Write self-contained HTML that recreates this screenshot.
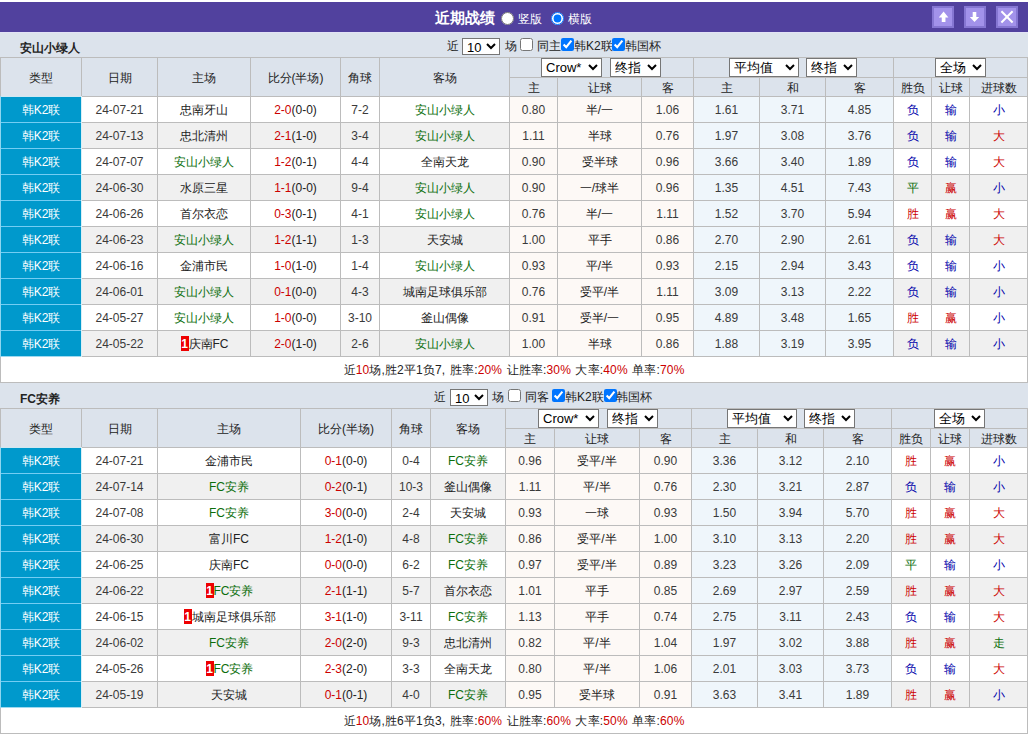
<!DOCTYPE html><html><head><meta charset="utf-8"><style>
html,body{margin:0;padding:0;background:#fff;}
body{width:1029px;height:735px;overflow:hidden;position:relative;font-family:"Liberation Sans",sans-serif;font-size:12px;color:#222;}
.a{position:absolute;}
.c{position:absolute;text-align:center;white-space:nowrap;overflow:hidden;}
.t{position:absolute;white-space:nowrap;}
.sel{position:absolute;margin:0;padding:0;font-family:"Liberation Sans",sans-serif;font-size:13px;color:#000;background:#fff;border:1px solid #767676;border-radius:0;box-sizing:border-box;}
.cb{position:absolute;margin:0;width:13px;height:13px;}
.card{display:inline-block;background:#e00;color:#fff;font-weight:bold;width:8px;height:15px;line-height:17px;overflow:hidden;text-align:center;vertical-align:middle;position:relative;top:-1px;margin-left:1px;}
</style></head><body>

<div class="a" style="left:0px;top:2px;width:1028px;height:732px;background:#dce3ec;"></div>
<div class="a" style="left:0px;top:2px;width:1028px;height:30px;background:#51419e;"></div>
<div class="a" style="left:0px;top:32px;width:1028px;height:1px;background:#e2e2f6;"></div>
<div class="t" style="left:435px;top:3px;width:80px;height:30px;line-height:30px;color:#fff;font-weight:bold;font-size:15px;text-align:left;">近期战绩</div>
<input type="radio" name="r" style="position:absolute;margin:0;left:501px;top:12px;width:13px;height:13px;">
<div class="t" style="left:518px;top:4px;width:40px;height:30px;line-height:30px;color:#fff;text-align:left;">竖版</div>
<input type="radio" name="r" checked style="position:absolute;margin:0;left:551px;top:12px;width:13px;height:13px;">
<div class="t" style="left:568px;top:4px;width:40px;height:30px;line-height:30px;color:#fff;text-align:left;">横版</div>
<div class="a" style="left:932px;top:6px;width:18px;height:18px;background:#a292ea;border:2px solid #8576d2;"></div>
<svg class="a" style="left:932px;top:6px" width="22" height="22"><path d="M11.6 5.6 L16.4 11.5 L13.45 11.5 L13.45 16 L9.75 16 L9.75 11.5 L6.8 11.5 Z" fill="#fff"/></svg>
<div class="a" style="left:964px;top:6px;width:18px;height:18px;background:#a292ea;border:2px solid #8576d2;"></div>
<svg class="a" style="left:964px;top:6px" width="22" height="22"><path d="M10.5 16 L15.2 11 L12.3 11 L12.3 6 L8.7 6 L8.7 11 L5.8 11 Z" fill="#fff"/></svg>
<div class="a" style="left:996px;top:6px;width:18px;height:18px;background:#a292ea;border:2px solid #8576d2;"></div>
<svg class="a" style="left:996px;top:6px" width="22" height="22"><path d="M5.4 5.2 L16.6 16.5 M16.6 5.2 L5.4 16.5" stroke="#fff" stroke-width="2"/></svg>
<div class="t" style="left:20px;top:36px;width:200px;height:25px;line-height:25px;font-weight:bold;text-align:left;font-size:12px;">安山小绿人</div>
<div class="t" style="left:447px;top:36px;width:60px;height:20px;line-height:20px;text-align:left;">近</div>
<select class="sel" style="left:462px;top:38px;width:38px;height:17px;"><option>10</option></select>
<div class="t" style="left:505px;top:36px;width:60px;height:20px;line-height:20px;text-align:left;">场</div>
<input type="checkbox" class="cb" style="left:520px;top:38px" >
<div class="t" style="left:537px;top:36px;width:60px;height:20px;line-height:20px;text-align:left;">同主</div>
<input type="checkbox" class="cb" style="left:561px;top:38px" checked>
<div class="t" style="left:574px;top:36px;width:60px;height:20px;line-height:20px;text-align:left;">韩K2联</div>
<input type="checkbox" class="cb" style="left:612px;top:38px" checked>
<div class="t" style="left:625px;top:36px;width:60px;height:20px;line-height:20px;text-align:left;">韩国杯</div>
<div class="a" style="left:0px;top:57px;width:1028px;height:326px;background:#bcbcbc;"></div>
<div class="a" style="left:1px;top:58px;width:80px;height:38px;background:#dce3ec;"></div>
<div class="c" style="left:1px;top:59px;width:80px;height:38px;line-height:38px;">类型</div>
<div class="a" style="left:82px;top:58px;width:75px;height:38px;background:#dce3ec;"></div>
<div class="c" style="left:82px;top:59px;width:75px;height:38px;line-height:38px;">日期</div>
<div class="a" style="left:158px;top:58px;width:92px;height:38px;background:#dce3ec;"></div>
<div class="c" style="left:158px;top:59px;width:92px;height:38px;line-height:38px;">主场</div>
<div class="a" style="left:251px;top:58px;width:89px;height:38px;background:#dce3ec;"></div>
<div class="c" style="left:251px;top:59px;width:89px;height:38px;line-height:38px;">比分(半场)</div>
<div class="a" style="left:341px;top:58px;width:38px;height:38px;background:#dce3ec;"></div>
<div class="c" style="left:341px;top:59px;width:38px;height:38px;line-height:38px;">角球</div>
<div class="a" style="left:380px;top:58px;width:129px;height:38px;background:#dce3ec;"></div>
<div class="c" style="left:380px;top:59px;width:129px;height:38px;line-height:38px;">客场</div>
<div class="a" style="left:510px;top:58px;width:183px;height:19px;background:#dce3ec;"></div>
<div class="a" style="left:694px;top:58px;width:199px;height:19px;background:#dce3ec;"></div>
<div class="a" style="left:894px;top:58px;width:133px;height:19px;background:#dce3ec;"></div>
<div class="a" style="left:510px;top:78px;width:47px;height:18px;background:#dce3ec;"></div>
<div class="c" style="left:510px;top:79px;width:47px;height:18px;line-height:18px;">主</div>
<div class="a" style="left:558px;top:78px;width:83px;height:18px;background:#dce3ec;"></div>
<div class="c" style="left:558px;top:79px;width:83px;height:18px;line-height:18px;">让球</div>
<div class="a" style="left:642px;top:78px;width:51px;height:18px;background:#dce3ec;"></div>
<div class="c" style="left:642px;top:79px;width:51px;height:18px;line-height:18px;">客</div>
<div class="a" style="left:694px;top:78px;width:65px;height:18px;background:#dce3ec;"></div>
<div class="c" style="left:694px;top:79px;width:65px;height:18px;line-height:18px;">主</div>
<div class="a" style="left:760px;top:78px;width:65px;height:18px;background:#dce3ec;"></div>
<div class="c" style="left:760px;top:79px;width:65px;height:18px;line-height:18px;">和</div>
<div class="a" style="left:826px;top:78px;width:67px;height:18px;background:#dce3ec;"></div>
<div class="c" style="left:826px;top:79px;width:67px;height:18px;line-height:18px;">客</div>
<div class="a" style="left:894px;top:78px;width:37px;height:18px;background:#dce3ec;"></div>
<div class="c" style="left:894px;top:79px;width:37px;height:18px;line-height:18px;">胜负</div>
<div class="a" style="left:932px;top:78px;width:37px;height:18px;background:#dce3ec;"></div>
<div class="c" style="left:932px;top:79px;width:37px;height:18px;line-height:18px;">让球</div>
<div class="a" style="left:970px;top:78px;width:57px;height:18px;background:#dce3ec;"></div>
<div class="c" style="left:970px;top:79px;width:57px;height:18px;line-height:18px;">进球数</div>
<select class="sel" style="left:541px;top:58px;width:61px;height:19px;"><option>Crow*</option></select>
<select class="sel" style="left:610px;top:58px;width:51px;height:19px;"><option>终指</option></select>
<select class="sel" style="left:729px;top:58px;width:70px;height:19px;"><option>平均值</option></select>
<select class="sel" style="left:806px;top:58px;width:51px;height:19px;"><option>终指</option></select>
<select class="sel" style="left:935px;top:58px;width:51px;height:19px;"><option>全场</option></select>
<div class="a" style="left:1px;top:97px;width:80px;height:25px;background:#0099cc;"></div>
<div class="c" style="left:1px;top:98px;width:80px;height:25px;line-height:25px;color:#fff;">韩K2联</div>
<div class="a" style="left:82px;top:97px;width:75px;height:25px;background:#fff;"></div>
<div class="c" style="left:82px;top:98px;width:75px;height:25px;line-height:25px;color:#3a3a3a;">24-07-21</div>
<div class="a" style="left:158px;top:97px;width:92px;height:25px;background:#fff;"></div>
<div class="c" style="left:158px;top:98px;width:92px;height:25px;line-height:25px;">忠南牙山</div>
<div class="a" style="left:251px;top:97px;width:89px;height:25px;background:#fff;"></div>
<div class="c" style="left:251px;top:98px;width:89px;height:25px;line-height:25px;"><span style="color:#cc0000">2-0</span>(0-0)</div>
<div class="a" style="left:341px;top:97px;width:38px;height:25px;background:#fff;"></div>
<div class="c" style="left:341px;top:98px;width:38px;height:25px;line-height:25px;color:#3a3a3a;">7-2</div>
<div class="a" style="left:380px;top:97px;width:129px;height:25px;background:#fff;"></div>
<div class="c" style="left:380px;top:98px;width:129px;height:25px;line-height:25px;"><span style="color:#0b6e0b">安山小绿人</span></div>
<div class="a" style="left:510px;top:97px;width:47px;height:25px;background:#fdf9f6;"></div>
<div class="c" style="left:510px;top:98px;width:47px;height:25px;line-height:25px;color:#3a3a3a;">0.80</div>
<div class="a" style="left:558px;top:97px;width:83px;height:25px;background:#fdf9f6;"></div>
<div class="c" style="left:558px;top:98px;width:83px;height:25px;line-height:25px;">半/一</div>
<div class="a" style="left:642px;top:97px;width:51px;height:25px;background:#fdf9f6;"></div>
<div class="c" style="left:642px;top:98px;width:51px;height:25px;line-height:25px;color:#3a3a3a;">1.06</div>
<div class="a" style="left:694px;top:97px;width:65px;height:25px;background:#eff6fb;"></div>
<div class="c" style="left:694px;top:98px;width:65px;height:25px;line-height:25px;color:#3a3a3a;">1.61</div>
<div class="a" style="left:760px;top:97px;width:65px;height:25px;background:#eff6fb;"></div>
<div class="c" style="left:760px;top:98px;width:65px;height:25px;line-height:25px;color:#3a3a3a;">3.71</div>
<div class="a" style="left:826px;top:97px;width:67px;height:25px;background:#eff6fb;"></div>
<div class="c" style="left:826px;top:98px;width:67px;height:25px;line-height:25px;color:#3a3a3a;">4.85</div>
<div class="a" style="left:894px;top:97px;width:37px;height:25px;background:#fff;"></div>
<div class="c" style="left:894px;top:98px;width:37px;height:25px;line-height:25px;"><span style="color:#0000aa">负</span></div>
<div class="a" style="left:932px;top:97px;width:37px;height:25px;background:#fff;"></div>
<div class="c" style="left:932px;top:98px;width:37px;height:25px;line-height:25px;"><span style="color:#0000aa">输</span></div>
<div class="a" style="left:970px;top:97px;width:57px;height:25px;background:#fff;"></div>
<div class="c" style="left:970px;top:98px;width:57px;height:25px;line-height:25px;"><span style="color:#0000aa">小</span></div>
<div class="a" style="left:1px;top:123px;width:80px;height:25px;background:#0099cc;"></div>
<div class="c" style="left:1px;top:124px;width:80px;height:25px;line-height:25px;color:#fff;">韩K2联</div>
<div class="a" style="left:82px;top:123px;width:75px;height:25px;background:#f0f0f0;"></div>
<div class="c" style="left:82px;top:124px;width:75px;height:25px;line-height:25px;color:#3a3a3a;">24-07-13</div>
<div class="a" style="left:158px;top:123px;width:92px;height:25px;background:#f0f0f0;"></div>
<div class="c" style="left:158px;top:124px;width:92px;height:25px;line-height:25px;">忠北清州</div>
<div class="a" style="left:251px;top:123px;width:89px;height:25px;background:#f0f0f0;"></div>
<div class="c" style="left:251px;top:124px;width:89px;height:25px;line-height:25px;"><span style="color:#cc0000">2-1</span>(1-0)</div>
<div class="a" style="left:341px;top:123px;width:38px;height:25px;background:#f0f0f0;"></div>
<div class="c" style="left:341px;top:124px;width:38px;height:25px;line-height:25px;color:#3a3a3a;">3-4</div>
<div class="a" style="left:380px;top:123px;width:129px;height:25px;background:#f0f0f0;"></div>
<div class="c" style="left:380px;top:124px;width:129px;height:25px;line-height:25px;"><span style="color:#0b6e0b">安山小绿人</span></div>
<div class="a" style="left:510px;top:123px;width:47px;height:25px;background:#fdf9f6;"></div>
<div class="c" style="left:510px;top:124px;width:47px;height:25px;line-height:25px;color:#3a3a3a;">1.11</div>
<div class="a" style="left:558px;top:123px;width:83px;height:25px;background:#fdf9f6;"></div>
<div class="c" style="left:558px;top:124px;width:83px;height:25px;line-height:25px;">半球</div>
<div class="a" style="left:642px;top:123px;width:51px;height:25px;background:#fdf9f6;"></div>
<div class="c" style="left:642px;top:124px;width:51px;height:25px;line-height:25px;color:#3a3a3a;">0.76</div>
<div class="a" style="left:694px;top:123px;width:65px;height:25px;background:#eff6fb;"></div>
<div class="c" style="left:694px;top:124px;width:65px;height:25px;line-height:25px;color:#3a3a3a;">1.97</div>
<div class="a" style="left:760px;top:123px;width:65px;height:25px;background:#eff6fb;"></div>
<div class="c" style="left:760px;top:124px;width:65px;height:25px;line-height:25px;color:#3a3a3a;">3.08</div>
<div class="a" style="left:826px;top:123px;width:67px;height:25px;background:#eff6fb;"></div>
<div class="c" style="left:826px;top:124px;width:67px;height:25px;line-height:25px;color:#3a3a3a;">3.76</div>
<div class="a" style="left:894px;top:123px;width:37px;height:25px;background:#f0f0f0;"></div>
<div class="c" style="left:894px;top:124px;width:37px;height:25px;line-height:25px;"><span style="color:#0000aa">负</span></div>
<div class="a" style="left:932px;top:123px;width:37px;height:25px;background:#f0f0f0;"></div>
<div class="c" style="left:932px;top:124px;width:37px;height:25px;line-height:25px;"><span style="color:#0000aa">输</span></div>
<div class="a" style="left:970px;top:123px;width:57px;height:25px;background:#f0f0f0;"></div>
<div class="c" style="left:970px;top:124px;width:57px;height:25px;line-height:25px;"><span style="color:#cc0000">大</span></div>
<div class="a" style="left:1px;top:149px;width:80px;height:25px;background:#0099cc;"></div>
<div class="c" style="left:1px;top:150px;width:80px;height:25px;line-height:25px;color:#fff;">韩K2联</div>
<div class="a" style="left:82px;top:149px;width:75px;height:25px;background:#fff;"></div>
<div class="c" style="left:82px;top:150px;width:75px;height:25px;line-height:25px;color:#3a3a3a;">24-07-07</div>
<div class="a" style="left:158px;top:149px;width:92px;height:25px;background:#fff;"></div>
<div class="c" style="left:158px;top:150px;width:92px;height:25px;line-height:25px;"><span style="color:#0b6e0b">安山小绿人</span></div>
<div class="a" style="left:251px;top:149px;width:89px;height:25px;background:#fff;"></div>
<div class="c" style="left:251px;top:150px;width:89px;height:25px;line-height:25px;"><span style="color:#cc0000">1-2</span>(0-1)</div>
<div class="a" style="left:341px;top:149px;width:38px;height:25px;background:#fff;"></div>
<div class="c" style="left:341px;top:150px;width:38px;height:25px;line-height:25px;color:#3a3a3a;">4-4</div>
<div class="a" style="left:380px;top:149px;width:129px;height:25px;background:#fff;"></div>
<div class="c" style="left:380px;top:150px;width:129px;height:25px;line-height:25px;">全南天龙</div>
<div class="a" style="left:510px;top:149px;width:47px;height:25px;background:#fdf9f6;"></div>
<div class="c" style="left:510px;top:150px;width:47px;height:25px;line-height:25px;color:#3a3a3a;">0.90</div>
<div class="a" style="left:558px;top:149px;width:83px;height:25px;background:#fdf9f6;"></div>
<div class="c" style="left:558px;top:150px;width:83px;height:25px;line-height:25px;">受半球</div>
<div class="a" style="left:642px;top:149px;width:51px;height:25px;background:#fdf9f6;"></div>
<div class="c" style="left:642px;top:150px;width:51px;height:25px;line-height:25px;color:#3a3a3a;">0.96</div>
<div class="a" style="left:694px;top:149px;width:65px;height:25px;background:#eff6fb;"></div>
<div class="c" style="left:694px;top:150px;width:65px;height:25px;line-height:25px;color:#3a3a3a;">3.66</div>
<div class="a" style="left:760px;top:149px;width:65px;height:25px;background:#eff6fb;"></div>
<div class="c" style="left:760px;top:150px;width:65px;height:25px;line-height:25px;color:#3a3a3a;">3.40</div>
<div class="a" style="left:826px;top:149px;width:67px;height:25px;background:#eff6fb;"></div>
<div class="c" style="left:826px;top:150px;width:67px;height:25px;line-height:25px;color:#3a3a3a;">1.89</div>
<div class="a" style="left:894px;top:149px;width:37px;height:25px;background:#fff;"></div>
<div class="c" style="left:894px;top:150px;width:37px;height:25px;line-height:25px;"><span style="color:#0000aa">负</span></div>
<div class="a" style="left:932px;top:149px;width:37px;height:25px;background:#fff;"></div>
<div class="c" style="left:932px;top:150px;width:37px;height:25px;line-height:25px;"><span style="color:#0000aa">输</span></div>
<div class="a" style="left:970px;top:149px;width:57px;height:25px;background:#fff;"></div>
<div class="c" style="left:970px;top:150px;width:57px;height:25px;line-height:25px;"><span style="color:#cc0000">大</span></div>
<div class="a" style="left:1px;top:175px;width:80px;height:25px;background:#0099cc;"></div>
<div class="c" style="left:1px;top:176px;width:80px;height:25px;line-height:25px;color:#fff;">韩K2联</div>
<div class="a" style="left:82px;top:175px;width:75px;height:25px;background:#f0f0f0;"></div>
<div class="c" style="left:82px;top:176px;width:75px;height:25px;line-height:25px;color:#3a3a3a;">24-06-30</div>
<div class="a" style="left:158px;top:175px;width:92px;height:25px;background:#f0f0f0;"></div>
<div class="c" style="left:158px;top:176px;width:92px;height:25px;line-height:25px;">水原三星</div>
<div class="a" style="left:251px;top:175px;width:89px;height:25px;background:#f0f0f0;"></div>
<div class="c" style="left:251px;top:176px;width:89px;height:25px;line-height:25px;"><span style="color:#cc0000">1-1</span>(0-0)</div>
<div class="a" style="left:341px;top:175px;width:38px;height:25px;background:#f0f0f0;"></div>
<div class="c" style="left:341px;top:176px;width:38px;height:25px;line-height:25px;color:#3a3a3a;">9-4</div>
<div class="a" style="left:380px;top:175px;width:129px;height:25px;background:#f0f0f0;"></div>
<div class="c" style="left:380px;top:176px;width:129px;height:25px;line-height:25px;"><span style="color:#0b6e0b">安山小绿人</span></div>
<div class="a" style="left:510px;top:175px;width:47px;height:25px;background:#fdf9f6;"></div>
<div class="c" style="left:510px;top:176px;width:47px;height:25px;line-height:25px;color:#3a3a3a;">0.90</div>
<div class="a" style="left:558px;top:175px;width:83px;height:25px;background:#fdf9f6;"></div>
<div class="c" style="left:558px;top:176px;width:83px;height:25px;line-height:25px;">一/球半</div>
<div class="a" style="left:642px;top:175px;width:51px;height:25px;background:#fdf9f6;"></div>
<div class="c" style="left:642px;top:176px;width:51px;height:25px;line-height:25px;color:#3a3a3a;">0.96</div>
<div class="a" style="left:694px;top:175px;width:65px;height:25px;background:#eff6fb;"></div>
<div class="c" style="left:694px;top:176px;width:65px;height:25px;line-height:25px;color:#3a3a3a;">1.35</div>
<div class="a" style="left:760px;top:175px;width:65px;height:25px;background:#eff6fb;"></div>
<div class="c" style="left:760px;top:176px;width:65px;height:25px;line-height:25px;color:#3a3a3a;">4.51</div>
<div class="a" style="left:826px;top:175px;width:67px;height:25px;background:#eff6fb;"></div>
<div class="c" style="left:826px;top:176px;width:67px;height:25px;line-height:25px;color:#3a3a3a;">7.43</div>
<div class="a" style="left:894px;top:175px;width:37px;height:25px;background:#f0f0f0;"></div>
<div class="c" style="left:894px;top:176px;width:37px;height:25px;line-height:25px;"><span style="color:#0b6e0b">平</span></div>
<div class="a" style="left:932px;top:175px;width:37px;height:25px;background:#f0f0f0;"></div>
<div class="c" style="left:932px;top:176px;width:37px;height:25px;line-height:25px;"><span style="color:#cc0000">赢</span></div>
<div class="a" style="left:970px;top:175px;width:57px;height:25px;background:#f0f0f0;"></div>
<div class="c" style="left:970px;top:176px;width:57px;height:25px;line-height:25px;"><span style="color:#0000aa">小</span></div>
<div class="a" style="left:1px;top:201px;width:80px;height:25px;background:#0099cc;"></div>
<div class="c" style="left:1px;top:202px;width:80px;height:25px;line-height:25px;color:#fff;">韩K2联</div>
<div class="a" style="left:82px;top:201px;width:75px;height:25px;background:#fff;"></div>
<div class="c" style="left:82px;top:202px;width:75px;height:25px;line-height:25px;color:#3a3a3a;">24-06-26</div>
<div class="a" style="left:158px;top:201px;width:92px;height:25px;background:#fff;"></div>
<div class="c" style="left:158px;top:202px;width:92px;height:25px;line-height:25px;">首尔衣恋</div>
<div class="a" style="left:251px;top:201px;width:89px;height:25px;background:#fff;"></div>
<div class="c" style="left:251px;top:202px;width:89px;height:25px;line-height:25px;"><span style="color:#cc0000">0-3</span>(0-1)</div>
<div class="a" style="left:341px;top:201px;width:38px;height:25px;background:#fff;"></div>
<div class="c" style="left:341px;top:202px;width:38px;height:25px;line-height:25px;color:#3a3a3a;">4-1</div>
<div class="a" style="left:380px;top:201px;width:129px;height:25px;background:#fff;"></div>
<div class="c" style="left:380px;top:202px;width:129px;height:25px;line-height:25px;"><span style="color:#0b6e0b">安山小绿人</span></div>
<div class="a" style="left:510px;top:201px;width:47px;height:25px;background:#fdf9f6;"></div>
<div class="c" style="left:510px;top:202px;width:47px;height:25px;line-height:25px;color:#3a3a3a;">0.76</div>
<div class="a" style="left:558px;top:201px;width:83px;height:25px;background:#fdf9f6;"></div>
<div class="c" style="left:558px;top:202px;width:83px;height:25px;line-height:25px;">半/一</div>
<div class="a" style="left:642px;top:201px;width:51px;height:25px;background:#fdf9f6;"></div>
<div class="c" style="left:642px;top:202px;width:51px;height:25px;line-height:25px;color:#3a3a3a;">1.11</div>
<div class="a" style="left:694px;top:201px;width:65px;height:25px;background:#eff6fb;"></div>
<div class="c" style="left:694px;top:202px;width:65px;height:25px;line-height:25px;color:#3a3a3a;">1.52</div>
<div class="a" style="left:760px;top:201px;width:65px;height:25px;background:#eff6fb;"></div>
<div class="c" style="left:760px;top:202px;width:65px;height:25px;line-height:25px;color:#3a3a3a;">3.70</div>
<div class="a" style="left:826px;top:201px;width:67px;height:25px;background:#eff6fb;"></div>
<div class="c" style="left:826px;top:202px;width:67px;height:25px;line-height:25px;color:#3a3a3a;">5.94</div>
<div class="a" style="left:894px;top:201px;width:37px;height:25px;background:#fff;"></div>
<div class="c" style="left:894px;top:202px;width:37px;height:25px;line-height:25px;"><span style="color:#cc0000">胜</span></div>
<div class="a" style="left:932px;top:201px;width:37px;height:25px;background:#fff;"></div>
<div class="c" style="left:932px;top:202px;width:37px;height:25px;line-height:25px;"><span style="color:#cc0000">赢</span></div>
<div class="a" style="left:970px;top:201px;width:57px;height:25px;background:#fff;"></div>
<div class="c" style="left:970px;top:202px;width:57px;height:25px;line-height:25px;"><span style="color:#cc0000">大</span></div>
<div class="a" style="left:1px;top:227px;width:80px;height:25px;background:#0099cc;"></div>
<div class="c" style="left:1px;top:228px;width:80px;height:25px;line-height:25px;color:#fff;">韩K2联</div>
<div class="a" style="left:82px;top:227px;width:75px;height:25px;background:#f0f0f0;"></div>
<div class="c" style="left:82px;top:228px;width:75px;height:25px;line-height:25px;color:#3a3a3a;">24-06-23</div>
<div class="a" style="left:158px;top:227px;width:92px;height:25px;background:#f0f0f0;"></div>
<div class="c" style="left:158px;top:228px;width:92px;height:25px;line-height:25px;"><span style="color:#0b6e0b">安山小绿人</span></div>
<div class="a" style="left:251px;top:227px;width:89px;height:25px;background:#f0f0f0;"></div>
<div class="c" style="left:251px;top:228px;width:89px;height:25px;line-height:25px;"><span style="color:#cc0000">1-2</span>(1-1)</div>
<div class="a" style="left:341px;top:227px;width:38px;height:25px;background:#f0f0f0;"></div>
<div class="c" style="left:341px;top:228px;width:38px;height:25px;line-height:25px;color:#3a3a3a;">1-3</div>
<div class="a" style="left:380px;top:227px;width:129px;height:25px;background:#f0f0f0;"></div>
<div class="c" style="left:380px;top:228px;width:129px;height:25px;line-height:25px;">天安城</div>
<div class="a" style="left:510px;top:227px;width:47px;height:25px;background:#fdf9f6;"></div>
<div class="c" style="left:510px;top:228px;width:47px;height:25px;line-height:25px;color:#3a3a3a;">1.00</div>
<div class="a" style="left:558px;top:227px;width:83px;height:25px;background:#fdf9f6;"></div>
<div class="c" style="left:558px;top:228px;width:83px;height:25px;line-height:25px;">平手</div>
<div class="a" style="left:642px;top:227px;width:51px;height:25px;background:#fdf9f6;"></div>
<div class="c" style="left:642px;top:228px;width:51px;height:25px;line-height:25px;color:#3a3a3a;">0.86</div>
<div class="a" style="left:694px;top:227px;width:65px;height:25px;background:#eff6fb;"></div>
<div class="c" style="left:694px;top:228px;width:65px;height:25px;line-height:25px;color:#3a3a3a;">2.70</div>
<div class="a" style="left:760px;top:227px;width:65px;height:25px;background:#eff6fb;"></div>
<div class="c" style="left:760px;top:228px;width:65px;height:25px;line-height:25px;color:#3a3a3a;">2.90</div>
<div class="a" style="left:826px;top:227px;width:67px;height:25px;background:#eff6fb;"></div>
<div class="c" style="left:826px;top:228px;width:67px;height:25px;line-height:25px;color:#3a3a3a;">2.61</div>
<div class="a" style="left:894px;top:227px;width:37px;height:25px;background:#f0f0f0;"></div>
<div class="c" style="left:894px;top:228px;width:37px;height:25px;line-height:25px;"><span style="color:#0000aa">负</span></div>
<div class="a" style="left:932px;top:227px;width:37px;height:25px;background:#f0f0f0;"></div>
<div class="c" style="left:932px;top:228px;width:37px;height:25px;line-height:25px;"><span style="color:#0000aa">输</span></div>
<div class="a" style="left:970px;top:227px;width:57px;height:25px;background:#f0f0f0;"></div>
<div class="c" style="left:970px;top:228px;width:57px;height:25px;line-height:25px;"><span style="color:#cc0000">大</span></div>
<div class="a" style="left:1px;top:253px;width:80px;height:25px;background:#0099cc;"></div>
<div class="c" style="left:1px;top:254px;width:80px;height:25px;line-height:25px;color:#fff;">韩K2联</div>
<div class="a" style="left:82px;top:253px;width:75px;height:25px;background:#fff;"></div>
<div class="c" style="left:82px;top:254px;width:75px;height:25px;line-height:25px;color:#3a3a3a;">24-06-16</div>
<div class="a" style="left:158px;top:253px;width:92px;height:25px;background:#fff;"></div>
<div class="c" style="left:158px;top:254px;width:92px;height:25px;line-height:25px;">金浦市民</div>
<div class="a" style="left:251px;top:253px;width:89px;height:25px;background:#fff;"></div>
<div class="c" style="left:251px;top:254px;width:89px;height:25px;line-height:25px;"><span style="color:#cc0000">1-0</span>(1-0)</div>
<div class="a" style="left:341px;top:253px;width:38px;height:25px;background:#fff;"></div>
<div class="c" style="left:341px;top:254px;width:38px;height:25px;line-height:25px;color:#3a3a3a;">1-4</div>
<div class="a" style="left:380px;top:253px;width:129px;height:25px;background:#fff;"></div>
<div class="c" style="left:380px;top:254px;width:129px;height:25px;line-height:25px;"><span style="color:#0b6e0b">安山小绿人</span></div>
<div class="a" style="left:510px;top:253px;width:47px;height:25px;background:#fdf9f6;"></div>
<div class="c" style="left:510px;top:254px;width:47px;height:25px;line-height:25px;color:#3a3a3a;">0.93</div>
<div class="a" style="left:558px;top:253px;width:83px;height:25px;background:#fdf9f6;"></div>
<div class="c" style="left:558px;top:254px;width:83px;height:25px;line-height:25px;">平/半</div>
<div class="a" style="left:642px;top:253px;width:51px;height:25px;background:#fdf9f6;"></div>
<div class="c" style="left:642px;top:254px;width:51px;height:25px;line-height:25px;color:#3a3a3a;">0.93</div>
<div class="a" style="left:694px;top:253px;width:65px;height:25px;background:#eff6fb;"></div>
<div class="c" style="left:694px;top:254px;width:65px;height:25px;line-height:25px;color:#3a3a3a;">2.15</div>
<div class="a" style="left:760px;top:253px;width:65px;height:25px;background:#eff6fb;"></div>
<div class="c" style="left:760px;top:254px;width:65px;height:25px;line-height:25px;color:#3a3a3a;">2.94</div>
<div class="a" style="left:826px;top:253px;width:67px;height:25px;background:#eff6fb;"></div>
<div class="c" style="left:826px;top:254px;width:67px;height:25px;line-height:25px;color:#3a3a3a;">3.43</div>
<div class="a" style="left:894px;top:253px;width:37px;height:25px;background:#fff;"></div>
<div class="c" style="left:894px;top:254px;width:37px;height:25px;line-height:25px;"><span style="color:#0000aa">负</span></div>
<div class="a" style="left:932px;top:253px;width:37px;height:25px;background:#fff;"></div>
<div class="c" style="left:932px;top:254px;width:37px;height:25px;line-height:25px;"><span style="color:#0000aa">输</span></div>
<div class="a" style="left:970px;top:253px;width:57px;height:25px;background:#fff;"></div>
<div class="c" style="left:970px;top:254px;width:57px;height:25px;line-height:25px;"><span style="color:#0000aa">小</span></div>
<div class="a" style="left:1px;top:279px;width:80px;height:25px;background:#0099cc;"></div>
<div class="c" style="left:1px;top:280px;width:80px;height:25px;line-height:25px;color:#fff;">韩K2联</div>
<div class="a" style="left:82px;top:279px;width:75px;height:25px;background:#f0f0f0;"></div>
<div class="c" style="left:82px;top:280px;width:75px;height:25px;line-height:25px;color:#3a3a3a;">24-06-01</div>
<div class="a" style="left:158px;top:279px;width:92px;height:25px;background:#f0f0f0;"></div>
<div class="c" style="left:158px;top:280px;width:92px;height:25px;line-height:25px;"><span style="color:#0b6e0b">安山小绿人</span></div>
<div class="a" style="left:251px;top:279px;width:89px;height:25px;background:#f0f0f0;"></div>
<div class="c" style="left:251px;top:280px;width:89px;height:25px;line-height:25px;"><span style="color:#cc0000">0-1</span>(0-0)</div>
<div class="a" style="left:341px;top:279px;width:38px;height:25px;background:#f0f0f0;"></div>
<div class="c" style="left:341px;top:280px;width:38px;height:25px;line-height:25px;color:#3a3a3a;">4-3</div>
<div class="a" style="left:380px;top:279px;width:129px;height:25px;background:#f0f0f0;"></div>
<div class="c" style="left:380px;top:280px;width:129px;height:25px;line-height:25px;">城南足球俱乐部</div>
<div class="a" style="left:510px;top:279px;width:47px;height:25px;background:#fdf9f6;"></div>
<div class="c" style="left:510px;top:280px;width:47px;height:25px;line-height:25px;color:#3a3a3a;">0.76</div>
<div class="a" style="left:558px;top:279px;width:83px;height:25px;background:#fdf9f6;"></div>
<div class="c" style="left:558px;top:280px;width:83px;height:25px;line-height:25px;">受平/半</div>
<div class="a" style="left:642px;top:279px;width:51px;height:25px;background:#fdf9f6;"></div>
<div class="c" style="left:642px;top:280px;width:51px;height:25px;line-height:25px;color:#3a3a3a;">1.11</div>
<div class="a" style="left:694px;top:279px;width:65px;height:25px;background:#eff6fb;"></div>
<div class="c" style="left:694px;top:280px;width:65px;height:25px;line-height:25px;color:#3a3a3a;">3.09</div>
<div class="a" style="left:760px;top:279px;width:65px;height:25px;background:#eff6fb;"></div>
<div class="c" style="left:760px;top:280px;width:65px;height:25px;line-height:25px;color:#3a3a3a;">3.13</div>
<div class="a" style="left:826px;top:279px;width:67px;height:25px;background:#eff6fb;"></div>
<div class="c" style="left:826px;top:280px;width:67px;height:25px;line-height:25px;color:#3a3a3a;">2.22</div>
<div class="a" style="left:894px;top:279px;width:37px;height:25px;background:#f0f0f0;"></div>
<div class="c" style="left:894px;top:280px;width:37px;height:25px;line-height:25px;"><span style="color:#0000aa">负</span></div>
<div class="a" style="left:932px;top:279px;width:37px;height:25px;background:#f0f0f0;"></div>
<div class="c" style="left:932px;top:280px;width:37px;height:25px;line-height:25px;"><span style="color:#0000aa">输</span></div>
<div class="a" style="left:970px;top:279px;width:57px;height:25px;background:#f0f0f0;"></div>
<div class="c" style="left:970px;top:280px;width:57px;height:25px;line-height:25px;"><span style="color:#0000aa">小</span></div>
<div class="a" style="left:1px;top:305px;width:80px;height:25px;background:#0099cc;"></div>
<div class="c" style="left:1px;top:306px;width:80px;height:25px;line-height:25px;color:#fff;">韩K2联</div>
<div class="a" style="left:82px;top:305px;width:75px;height:25px;background:#fff;"></div>
<div class="c" style="left:82px;top:306px;width:75px;height:25px;line-height:25px;color:#3a3a3a;">24-05-27</div>
<div class="a" style="left:158px;top:305px;width:92px;height:25px;background:#fff;"></div>
<div class="c" style="left:158px;top:306px;width:92px;height:25px;line-height:25px;"><span style="color:#0b6e0b">安山小绿人</span></div>
<div class="a" style="left:251px;top:305px;width:89px;height:25px;background:#fff;"></div>
<div class="c" style="left:251px;top:306px;width:89px;height:25px;line-height:25px;"><span style="color:#cc0000">1-0</span>(0-0)</div>
<div class="a" style="left:341px;top:305px;width:38px;height:25px;background:#fff;"></div>
<div class="c" style="left:341px;top:306px;width:38px;height:25px;line-height:25px;color:#3a3a3a;">3-10</div>
<div class="a" style="left:380px;top:305px;width:129px;height:25px;background:#fff;"></div>
<div class="c" style="left:380px;top:306px;width:129px;height:25px;line-height:25px;">釜山偶像</div>
<div class="a" style="left:510px;top:305px;width:47px;height:25px;background:#fdf9f6;"></div>
<div class="c" style="left:510px;top:306px;width:47px;height:25px;line-height:25px;color:#3a3a3a;">0.91</div>
<div class="a" style="left:558px;top:305px;width:83px;height:25px;background:#fdf9f6;"></div>
<div class="c" style="left:558px;top:306px;width:83px;height:25px;line-height:25px;">受半/一</div>
<div class="a" style="left:642px;top:305px;width:51px;height:25px;background:#fdf9f6;"></div>
<div class="c" style="left:642px;top:306px;width:51px;height:25px;line-height:25px;color:#3a3a3a;">0.95</div>
<div class="a" style="left:694px;top:305px;width:65px;height:25px;background:#eff6fb;"></div>
<div class="c" style="left:694px;top:306px;width:65px;height:25px;line-height:25px;color:#3a3a3a;">4.89</div>
<div class="a" style="left:760px;top:305px;width:65px;height:25px;background:#eff6fb;"></div>
<div class="c" style="left:760px;top:306px;width:65px;height:25px;line-height:25px;color:#3a3a3a;">3.48</div>
<div class="a" style="left:826px;top:305px;width:67px;height:25px;background:#eff6fb;"></div>
<div class="c" style="left:826px;top:306px;width:67px;height:25px;line-height:25px;color:#3a3a3a;">1.65</div>
<div class="a" style="left:894px;top:305px;width:37px;height:25px;background:#fff;"></div>
<div class="c" style="left:894px;top:306px;width:37px;height:25px;line-height:25px;"><span style="color:#cc0000">胜</span></div>
<div class="a" style="left:932px;top:305px;width:37px;height:25px;background:#fff;"></div>
<div class="c" style="left:932px;top:306px;width:37px;height:25px;line-height:25px;"><span style="color:#cc0000">赢</span></div>
<div class="a" style="left:970px;top:305px;width:57px;height:25px;background:#fff;"></div>
<div class="c" style="left:970px;top:306px;width:57px;height:25px;line-height:25px;"><span style="color:#0000aa">小</span></div>
<div class="a" style="left:1px;top:331px;width:80px;height:25px;background:#0099cc;"></div>
<div class="c" style="left:1px;top:332px;width:80px;height:25px;line-height:25px;color:#fff;">韩K2联</div>
<div class="a" style="left:82px;top:331px;width:75px;height:25px;background:#f0f0f0;"></div>
<div class="c" style="left:82px;top:332px;width:75px;height:25px;line-height:25px;color:#3a3a3a;">24-05-22</div>
<div class="a" style="left:158px;top:331px;width:92px;height:25px;background:#f0f0f0;"></div>
<div class="c" style="left:158px;top:332px;width:92px;height:25px;line-height:25px;"><span class="card">1</span>庆南FC</div>
<div class="a" style="left:251px;top:331px;width:89px;height:25px;background:#f0f0f0;"></div>
<div class="c" style="left:251px;top:332px;width:89px;height:25px;line-height:25px;"><span style="color:#cc0000">2-0</span>(1-0)</div>
<div class="a" style="left:341px;top:331px;width:38px;height:25px;background:#f0f0f0;"></div>
<div class="c" style="left:341px;top:332px;width:38px;height:25px;line-height:25px;color:#3a3a3a;">2-6</div>
<div class="a" style="left:380px;top:331px;width:129px;height:25px;background:#f0f0f0;"></div>
<div class="c" style="left:380px;top:332px;width:129px;height:25px;line-height:25px;"><span style="color:#0b6e0b">安山小绿人</span></div>
<div class="a" style="left:510px;top:331px;width:47px;height:25px;background:#fdf9f6;"></div>
<div class="c" style="left:510px;top:332px;width:47px;height:25px;line-height:25px;color:#3a3a3a;">1.00</div>
<div class="a" style="left:558px;top:331px;width:83px;height:25px;background:#fdf9f6;"></div>
<div class="c" style="left:558px;top:332px;width:83px;height:25px;line-height:25px;">半球</div>
<div class="a" style="left:642px;top:331px;width:51px;height:25px;background:#fdf9f6;"></div>
<div class="c" style="left:642px;top:332px;width:51px;height:25px;line-height:25px;color:#3a3a3a;">0.86</div>
<div class="a" style="left:694px;top:331px;width:65px;height:25px;background:#eff6fb;"></div>
<div class="c" style="left:694px;top:332px;width:65px;height:25px;line-height:25px;color:#3a3a3a;">1.88</div>
<div class="a" style="left:760px;top:331px;width:65px;height:25px;background:#eff6fb;"></div>
<div class="c" style="left:760px;top:332px;width:65px;height:25px;line-height:25px;color:#3a3a3a;">3.19</div>
<div class="a" style="left:826px;top:331px;width:67px;height:25px;background:#eff6fb;"></div>
<div class="c" style="left:826px;top:332px;width:67px;height:25px;line-height:25px;color:#3a3a3a;">3.95</div>
<div class="a" style="left:894px;top:331px;width:37px;height:25px;background:#f0f0f0;"></div>
<div class="c" style="left:894px;top:332px;width:37px;height:25px;line-height:25px;"><span style="color:#0000aa">负</span></div>
<div class="a" style="left:932px;top:331px;width:37px;height:25px;background:#f0f0f0;"></div>
<div class="c" style="left:932px;top:332px;width:37px;height:25px;line-height:25px;"><span style="color:#0000aa">输</span></div>
<div class="a" style="left:970px;top:331px;width:57px;height:25px;background:#f0f0f0;"></div>
<div class="c" style="left:970px;top:332px;width:57px;height:25px;line-height:25px;"><span style="color:#0000aa">小</span></div>
<div class="a" style="left:0px;top:96px;width:1px;height:261px;background:#8fd6f0;"></div>
<div class="a" style="left:1px;top:96px;width:80px;height:1px;background:#cfe8f2;"></div>
<div class="a" style="left:81px;top:96px;width:1px;height:261px;background:#d8eff7;"></div>
<div class="a" style="left:1px;top:122px;width:80px;height:1px;background:#74cdf3;"></div>
<div class="a" style="left:1px;top:148px;width:80px;height:1px;background:#74cdf3;"></div>
<div class="a" style="left:1px;top:174px;width:80px;height:1px;background:#74cdf3;"></div>
<div class="a" style="left:1px;top:200px;width:80px;height:1px;background:#74cdf3;"></div>
<div class="a" style="left:1px;top:226px;width:80px;height:1px;background:#74cdf3;"></div>
<div class="a" style="left:1px;top:252px;width:80px;height:1px;background:#74cdf3;"></div>
<div class="a" style="left:1px;top:278px;width:80px;height:1px;background:#74cdf3;"></div>
<div class="a" style="left:1px;top:304px;width:80px;height:1px;background:#74cdf3;"></div>
<div class="a" style="left:1px;top:330px;width:80px;height:1px;background:#74cdf3;"></div>
<div class="a" style="left:1px;top:356px;width:80px;height:1px;background:#9fd9ef;"></div>
<div class="a" style="left:1px;top:357px;width:1026px;height:25px;background:#fff;"></div>
<div class="c" style="left:1px;top:358px;width:1026px;height:25px;line-height:25px;letter-spacing:0.15px;word-spacing:1px;">近<span style="color:#cc0000">10</span>场,胜2平1负7, 胜率:<span style="color:#cc0000">20%</span> 让胜率:<span style="color:#cc0000">30%</span> 大率:<span style="color:#cc0000">40%</span> 单率:<span style="color:#cc0000">70%</span></div>
<div class="t" style="left:20px;top:387px;width:200px;height:25px;line-height:25px;font-weight:bold;text-align:left;font-size:12px;">FC安养</div>
<div class="t" style="left:434px;top:387px;width:60px;height:20px;line-height:20px;text-align:left;">近</div>
<select class="sel" style="left:450px;top:389px;width:38px;height:17px;"><option>10</option></select>
<div class="t" style="left:492px;top:387px;width:60px;height:20px;line-height:20px;text-align:left;">场</div>
<input type="checkbox" class="cb" style="left:508px;top:389px" >
<div class="t" style="left:525px;top:387px;width:60px;height:20px;line-height:20px;text-align:left;">同客</div>
<input type="checkbox" class="cb" style="left:552px;top:389px" checked>
<div class="t" style="left:565px;top:387px;width:60px;height:20px;line-height:20px;text-align:left;">韩K2联</div>
<input type="checkbox" class="cb" style="left:604px;top:389px" checked>
<div class="t" style="left:616px;top:387px;width:60px;height:20px;line-height:20px;text-align:left;">韩国杯</div>
<div class="a" style="left:0px;top:408px;width:1028px;height:326px;background:#bcbcbc;"></div>
<div class="a" style="left:1px;top:409px;width:80px;height:38px;background:#dce3ec;"></div>
<div class="c" style="left:1px;top:410px;width:80px;height:38px;line-height:38px;">类型</div>
<div class="a" style="left:82px;top:409px;width:75px;height:38px;background:#dce3ec;"></div>
<div class="c" style="left:82px;top:410px;width:75px;height:38px;line-height:38px;">日期</div>
<div class="a" style="left:158px;top:409px;width:142px;height:38px;background:#dce3ec;"></div>
<div class="c" style="left:158px;top:410px;width:142px;height:38px;line-height:38px;">主场</div>
<div class="a" style="left:301px;top:409px;width:90px;height:38px;background:#dce3ec;"></div>
<div class="c" style="left:301px;top:410px;width:90px;height:38px;line-height:38px;">比分(半场)</div>
<div class="a" style="left:392px;top:409px;width:38px;height:38px;background:#dce3ec;"></div>
<div class="c" style="left:392px;top:410px;width:38px;height:38px;line-height:38px;">角球</div>
<div class="a" style="left:431px;top:409px;width:74px;height:38px;background:#dce3ec;"></div>
<div class="c" style="left:431px;top:410px;width:74px;height:38px;line-height:38px;">客场</div>
<div class="a" style="left:506px;top:409px;width:185px;height:19px;background:#dce3ec;"></div>
<div class="a" style="left:692px;top:409px;width:199px;height:19px;background:#dce3ec;"></div>
<div class="a" style="left:892px;top:409px;width:135px;height:19px;background:#dce3ec;"></div>
<div class="a" style="left:506px;top:429px;width:48px;height:18px;background:#dce3ec;"></div>
<div class="c" style="left:506px;top:430px;width:48px;height:18px;line-height:18px;">主</div>
<div class="a" style="left:555px;top:429px;width:84px;height:18px;background:#dce3ec;"></div>
<div class="c" style="left:555px;top:430px;width:84px;height:18px;line-height:18px;">让球</div>
<div class="a" style="left:640px;top:429px;width:51px;height:18px;background:#dce3ec;"></div>
<div class="c" style="left:640px;top:430px;width:51px;height:18px;line-height:18px;">客</div>
<div class="a" style="left:692px;top:429px;width:65px;height:18px;background:#dce3ec;"></div>
<div class="c" style="left:692px;top:430px;width:65px;height:18px;line-height:18px;">主</div>
<div class="a" style="left:758px;top:429px;width:65px;height:18px;background:#dce3ec;"></div>
<div class="c" style="left:758px;top:430px;width:65px;height:18px;line-height:18px;">和</div>
<div class="a" style="left:824px;top:429px;width:67px;height:18px;background:#dce3ec;"></div>
<div class="c" style="left:824px;top:430px;width:67px;height:18px;line-height:18px;">客</div>
<div class="a" style="left:892px;top:429px;width:38px;height:18px;background:#dce3ec;"></div>
<div class="c" style="left:892px;top:430px;width:38px;height:18px;line-height:18px;">胜负</div>
<div class="a" style="left:931px;top:429px;width:38px;height:18px;background:#dce3ec;"></div>
<div class="c" style="left:931px;top:430px;width:38px;height:18px;line-height:18px;">让球</div>
<div class="a" style="left:970px;top:429px;width:57px;height:18px;background:#dce3ec;"></div>
<div class="c" style="left:970px;top:430px;width:57px;height:18px;line-height:18px;">进球数</div>
<select class="sel" style="left:538px;top:409px;width:61px;height:19px;"><option>Crow*</option></select>
<select class="sel" style="left:607px;top:409px;width:51px;height:19px;"><option>终指</option></select>
<select class="sel" style="left:727px;top:409px;width:70px;height:19px;"><option>平均值</option></select>
<select class="sel" style="left:804px;top:409px;width:51px;height:19px;"><option>终指</option></select>
<select class="sel" style="left:934px;top:409px;width:51px;height:19px;"><option>全场</option></select>
<div class="a" style="left:1px;top:448px;width:80px;height:25px;background:#0099cc;"></div>
<div class="c" style="left:1px;top:449px;width:80px;height:25px;line-height:25px;color:#fff;">韩K2联</div>
<div class="a" style="left:82px;top:448px;width:75px;height:25px;background:#fff;"></div>
<div class="c" style="left:82px;top:449px;width:75px;height:25px;line-height:25px;color:#3a3a3a;">24-07-21</div>
<div class="a" style="left:158px;top:448px;width:142px;height:25px;background:#fff;"></div>
<div class="c" style="left:158px;top:449px;width:142px;height:25px;line-height:25px;">金浦市民</div>
<div class="a" style="left:301px;top:448px;width:90px;height:25px;background:#fff;"></div>
<div class="c" style="left:301px;top:449px;width:90px;height:25px;line-height:25px;"><span style="color:#cc0000">0-1</span>(0-0)</div>
<div class="a" style="left:392px;top:448px;width:38px;height:25px;background:#fff;"></div>
<div class="c" style="left:392px;top:449px;width:38px;height:25px;line-height:25px;color:#3a3a3a;">0-4</div>
<div class="a" style="left:431px;top:448px;width:74px;height:25px;background:#fff;"></div>
<div class="c" style="left:431px;top:449px;width:74px;height:25px;line-height:25px;"><span style="color:#0b6e0b">FC安养</span></div>
<div class="a" style="left:506px;top:448px;width:48px;height:25px;background:#fdf9f6;"></div>
<div class="c" style="left:506px;top:449px;width:48px;height:25px;line-height:25px;color:#3a3a3a;">0.96</div>
<div class="a" style="left:555px;top:448px;width:84px;height:25px;background:#fdf9f6;"></div>
<div class="c" style="left:555px;top:449px;width:84px;height:25px;line-height:25px;">受平/半</div>
<div class="a" style="left:640px;top:448px;width:51px;height:25px;background:#fdf9f6;"></div>
<div class="c" style="left:640px;top:449px;width:51px;height:25px;line-height:25px;color:#3a3a3a;">0.90</div>
<div class="a" style="left:692px;top:448px;width:65px;height:25px;background:#eff6fb;"></div>
<div class="c" style="left:692px;top:449px;width:65px;height:25px;line-height:25px;color:#3a3a3a;">3.36</div>
<div class="a" style="left:758px;top:448px;width:65px;height:25px;background:#eff6fb;"></div>
<div class="c" style="left:758px;top:449px;width:65px;height:25px;line-height:25px;color:#3a3a3a;">3.12</div>
<div class="a" style="left:824px;top:448px;width:67px;height:25px;background:#eff6fb;"></div>
<div class="c" style="left:824px;top:449px;width:67px;height:25px;line-height:25px;color:#3a3a3a;">2.10</div>
<div class="a" style="left:892px;top:448px;width:38px;height:25px;background:#fff;"></div>
<div class="c" style="left:892px;top:449px;width:38px;height:25px;line-height:25px;"><span style="color:#cc0000">胜</span></div>
<div class="a" style="left:931px;top:448px;width:38px;height:25px;background:#fff;"></div>
<div class="c" style="left:931px;top:449px;width:38px;height:25px;line-height:25px;"><span style="color:#cc0000">赢</span></div>
<div class="a" style="left:970px;top:448px;width:57px;height:25px;background:#fff;"></div>
<div class="c" style="left:970px;top:449px;width:57px;height:25px;line-height:25px;"><span style="color:#0000aa">小</span></div>
<div class="a" style="left:1px;top:474px;width:80px;height:25px;background:#0099cc;"></div>
<div class="c" style="left:1px;top:475px;width:80px;height:25px;line-height:25px;color:#fff;">韩K2联</div>
<div class="a" style="left:82px;top:474px;width:75px;height:25px;background:#f0f0f0;"></div>
<div class="c" style="left:82px;top:475px;width:75px;height:25px;line-height:25px;color:#3a3a3a;">24-07-14</div>
<div class="a" style="left:158px;top:474px;width:142px;height:25px;background:#f0f0f0;"></div>
<div class="c" style="left:158px;top:475px;width:142px;height:25px;line-height:25px;"><span style="color:#0b6e0b">FC安养</span></div>
<div class="a" style="left:301px;top:474px;width:90px;height:25px;background:#f0f0f0;"></div>
<div class="c" style="left:301px;top:475px;width:90px;height:25px;line-height:25px;"><span style="color:#cc0000">0-2</span>(0-1)</div>
<div class="a" style="left:392px;top:474px;width:38px;height:25px;background:#f0f0f0;"></div>
<div class="c" style="left:392px;top:475px;width:38px;height:25px;line-height:25px;color:#3a3a3a;">10-3</div>
<div class="a" style="left:431px;top:474px;width:74px;height:25px;background:#f0f0f0;"></div>
<div class="c" style="left:431px;top:475px;width:74px;height:25px;line-height:25px;">釜山偶像</div>
<div class="a" style="left:506px;top:474px;width:48px;height:25px;background:#fdf9f6;"></div>
<div class="c" style="left:506px;top:475px;width:48px;height:25px;line-height:25px;color:#3a3a3a;">1.11</div>
<div class="a" style="left:555px;top:474px;width:84px;height:25px;background:#fdf9f6;"></div>
<div class="c" style="left:555px;top:475px;width:84px;height:25px;line-height:25px;">平/半</div>
<div class="a" style="left:640px;top:474px;width:51px;height:25px;background:#fdf9f6;"></div>
<div class="c" style="left:640px;top:475px;width:51px;height:25px;line-height:25px;color:#3a3a3a;">0.76</div>
<div class="a" style="left:692px;top:474px;width:65px;height:25px;background:#eff6fb;"></div>
<div class="c" style="left:692px;top:475px;width:65px;height:25px;line-height:25px;color:#3a3a3a;">2.30</div>
<div class="a" style="left:758px;top:474px;width:65px;height:25px;background:#eff6fb;"></div>
<div class="c" style="left:758px;top:475px;width:65px;height:25px;line-height:25px;color:#3a3a3a;">3.21</div>
<div class="a" style="left:824px;top:474px;width:67px;height:25px;background:#eff6fb;"></div>
<div class="c" style="left:824px;top:475px;width:67px;height:25px;line-height:25px;color:#3a3a3a;">2.87</div>
<div class="a" style="left:892px;top:474px;width:38px;height:25px;background:#f0f0f0;"></div>
<div class="c" style="left:892px;top:475px;width:38px;height:25px;line-height:25px;"><span style="color:#0000aa">负</span></div>
<div class="a" style="left:931px;top:474px;width:38px;height:25px;background:#f0f0f0;"></div>
<div class="c" style="left:931px;top:475px;width:38px;height:25px;line-height:25px;"><span style="color:#0000aa">输</span></div>
<div class="a" style="left:970px;top:474px;width:57px;height:25px;background:#f0f0f0;"></div>
<div class="c" style="left:970px;top:475px;width:57px;height:25px;line-height:25px;"><span style="color:#0000aa">小</span></div>
<div class="a" style="left:1px;top:500px;width:80px;height:25px;background:#0099cc;"></div>
<div class="c" style="left:1px;top:501px;width:80px;height:25px;line-height:25px;color:#fff;">韩K2联</div>
<div class="a" style="left:82px;top:500px;width:75px;height:25px;background:#fff;"></div>
<div class="c" style="left:82px;top:501px;width:75px;height:25px;line-height:25px;color:#3a3a3a;">24-07-08</div>
<div class="a" style="left:158px;top:500px;width:142px;height:25px;background:#fff;"></div>
<div class="c" style="left:158px;top:501px;width:142px;height:25px;line-height:25px;"><span style="color:#0b6e0b">FC安养</span></div>
<div class="a" style="left:301px;top:500px;width:90px;height:25px;background:#fff;"></div>
<div class="c" style="left:301px;top:501px;width:90px;height:25px;line-height:25px;"><span style="color:#cc0000">3-0</span>(0-0)</div>
<div class="a" style="left:392px;top:500px;width:38px;height:25px;background:#fff;"></div>
<div class="c" style="left:392px;top:501px;width:38px;height:25px;line-height:25px;color:#3a3a3a;">2-4</div>
<div class="a" style="left:431px;top:500px;width:74px;height:25px;background:#fff;"></div>
<div class="c" style="left:431px;top:501px;width:74px;height:25px;line-height:25px;">天安城</div>
<div class="a" style="left:506px;top:500px;width:48px;height:25px;background:#fdf9f6;"></div>
<div class="c" style="left:506px;top:501px;width:48px;height:25px;line-height:25px;color:#3a3a3a;">0.93</div>
<div class="a" style="left:555px;top:500px;width:84px;height:25px;background:#fdf9f6;"></div>
<div class="c" style="left:555px;top:501px;width:84px;height:25px;line-height:25px;">一球</div>
<div class="a" style="left:640px;top:500px;width:51px;height:25px;background:#fdf9f6;"></div>
<div class="c" style="left:640px;top:501px;width:51px;height:25px;line-height:25px;color:#3a3a3a;">0.93</div>
<div class="a" style="left:692px;top:500px;width:65px;height:25px;background:#eff6fb;"></div>
<div class="c" style="left:692px;top:501px;width:65px;height:25px;line-height:25px;color:#3a3a3a;">1.50</div>
<div class="a" style="left:758px;top:500px;width:65px;height:25px;background:#eff6fb;"></div>
<div class="c" style="left:758px;top:501px;width:65px;height:25px;line-height:25px;color:#3a3a3a;">3.94</div>
<div class="a" style="left:824px;top:500px;width:67px;height:25px;background:#eff6fb;"></div>
<div class="c" style="left:824px;top:501px;width:67px;height:25px;line-height:25px;color:#3a3a3a;">5.70</div>
<div class="a" style="left:892px;top:500px;width:38px;height:25px;background:#fff;"></div>
<div class="c" style="left:892px;top:501px;width:38px;height:25px;line-height:25px;"><span style="color:#cc0000">胜</span></div>
<div class="a" style="left:931px;top:500px;width:38px;height:25px;background:#fff;"></div>
<div class="c" style="left:931px;top:501px;width:38px;height:25px;line-height:25px;"><span style="color:#cc0000">赢</span></div>
<div class="a" style="left:970px;top:500px;width:57px;height:25px;background:#fff;"></div>
<div class="c" style="left:970px;top:501px;width:57px;height:25px;line-height:25px;"><span style="color:#cc0000">大</span></div>
<div class="a" style="left:1px;top:526px;width:80px;height:25px;background:#0099cc;"></div>
<div class="c" style="left:1px;top:527px;width:80px;height:25px;line-height:25px;color:#fff;">韩K2联</div>
<div class="a" style="left:82px;top:526px;width:75px;height:25px;background:#f0f0f0;"></div>
<div class="c" style="left:82px;top:527px;width:75px;height:25px;line-height:25px;color:#3a3a3a;">24-06-30</div>
<div class="a" style="left:158px;top:526px;width:142px;height:25px;background:#f0f0f0;"></div>
<div class="c" style="left:158px;top:527px;width:142px;height:25px;line-height:25px;">富川FC</div>
<div class="a" style="left:301px;top:526px;width:90px;height:25px;background:#f0f0f0;"></div>
<div class="c" style="left:301px;top:527px;width:90px;height:25px;line-height:25px;"><span style="color:#cc0000">1-2</span>(1-0)</div>
<div class="a" style="left:392px;top:526px;width:38px;height:25px;background:#f0f0f0;"></div>
<div class="c" style="left:392px;top:527px;width:38px;height:25px;line-height:25px;color:#3a3a3a;">4-8</div>
<div class="a" style="left:431px;top:526px;width:74px;height:25px;background:#f0f0f0;"></div>
<div class="c" style="left:431px;top:527px;width:74px;height:25px;line-height:25px;"><span style="color:#0b6e0b">FC安养</span></div>
<div class="a" style="left:506px;top:526px;width:48px;height:25px;background:#fdf9f6;"></div>
<div class="c" style="left:506px;top:527px;width:48px;height:25px;line-height:25px;color:#3a3a3a;">0.86</div>
<div class="a" style="left:555px;top:526px;width:84px;height:25px;background:#fdf9f6;"></div>
<div class="c" style="left:555px;top:527px;width:84px;height:25px;line-height:25px;">受平/半</div>
<div class="a" style="left:640px;top:526px;width:51px;height:25px;background:#fdf9f6;"></div>
<div class="c" style="left:640px;top:527px;width:51px;height:25px;line-height:25px;color:#3a3a3a;">1.00</div>
<div class="a" style="left:692px;top:526px;width:65px;height:25px;background:#eff6fb;"></div>
<div class="c" style="left:692px;top:527px;width:65px;height:25px;line-height:25px;color:#3a3a3a;">3.10</div>
<div class="a" style="left:758px;top:526px;width:65px;height:25px;background:#eff6fb;"></div>
<div class="c" style="left:758px;top:527px;width:65px;height:25px;line-height:25px;color:#3a3a3a;">3.13</div>
<div class="a" style="left:824px;top:526px;width:67px;height:25px;background:#eff6fb;"></div>
<div class="c" style="left:824px;top:527px;width:67px;height:25px;line-height:25px;color:#3a3a3a;">2.20</div>
<div class="a" style="left:892px;top:526px;width:38px;height:25px;background:#f0f0f0;"></div>
<div class="c" style="left:892px;top:527px;width:38px;height:25px;line-height:25px;"><span style="color:#cc0000">胜</span></div>
<div class="a" style="left:931px;top:526px;width:38px;height:25px;background:#f0f0f0;"></div>
<div class="c" style="left:931px;top:527px;width:38px;height:25px;line-height:25px;"><span style="color:#cc0000">赢</span></div>
<div class="a" style="left:970px;top:526px;width:57px;height:25px;background:#f0f0f0;"></div>
<div class="c" style="left:970px;top:527px;width:57px;height:25px;line-height:25px;"><span style="color:#cc0000">大</span></div>
<div class="a" style="left:1px;top:552px;width:80px;height:25px;background:#0099cc;"></div>
<div class="c" style="left:1px;top:553px;width:80px;height:25px;line-height:25px;color:#fff;">韩K2联</div>
<div class="a" style="left:82px;top:552px;width:75px;height:25px;background:#fff;"></div>
<div class="c" style="left:82px;top:553px;width:75px;height:25px;line-height:25px;color:#3a3a3a;">24-06-25</div>
<div class="a" style="left:158px;top:552px;width:142px;height:25px;background:#fff;"></div>
<div class="c" style="left:158px;top:553px;width:142px;height:25px;line-height:25px;">庆南FC</div>
<div class="a" style="left:301px;top:552px;width:90px;height:25px;background:#fff;"></div>
<div class="c" style="left:301px;top:553px;width:90px;height:25px;line-height:25px;"><span style="color:#cc0000">0-0</span>(0-0)</div>
<div class="a" style="left:392px;top:552px;width:38px;height:25px;background:#fff;"></div>
<div class="c" style="left:392px;top:553px;width:38px;height:25px;line-height:25px;color:#3a3a3a;">6-2</div>
<div class="a" style="left:431px;top:552px;width:74px;height:25px;background:#fff;"></div>
<div class="c" style="left:431px;top:553px;width:74px;height:25px;line-height:25px;"><span style="color:#0b6e0b">FC安养</span></div>
<div class="a" style="left:506px;top:552px;width:48px;height:25px;background:#fdf9f6;"></div>
<div class="c" style="left:506px;top:553px;width:48px;height:25px;line-height:25px;color:#3a3a3a;">0.97</div>
<div class="a" style="left:555px;top:552px;width:84px;height:25px;background:#fdf9f6;"></div>
<div class="c" style="left:555px;top:553px;width:84px;height:25px;line-height:25px;">受平/半</div>
<div class="a" style="left:640px;top:552px;width:51px;height:25px;background:#fdf9f6;"></div>
<div class="c" style="left:640px;top:553px;width:51px;height:25px;line-height:25px;color:#3a3a3a;">0.89</div>
<div class="a" style="left:692px;top:552px;width:65px;height:25px;background:#eff6fb;"></div>
<div class="c" style="left:692px;top:553px;width:65px;height:25px;line-height:25px;color:#3a3a3a;">3.23</div>
<div class="a" style="left:758px;top:552px;width:65px;height:25px;background:#eff6fb;"></div>
<div class="c" style="left:758px;top:553px;width:65px;height:25px;line-height:25px;color:#3a3a3a;">3.26</div>
<div class="a" style="left:824px;top:552px;width:67px;height:25px;background:#eff6fb;"></div>
<div class="c" style="left:824px;top:553px;width:67px;height:25px;line-height:25px;color:#3a3a3a;">2.09</div>
<div class="a" style="left:892px;top:552px;width:38px;height:25px;background:#fff;"></div>
<div class="c" style="left:892px;top:553px;width:38px;height:25px;line-height:25px;"><span style="color:#0b6e0b">平</span></div>
<div class="a" style="left:931px;top:552px;width:38px;height:25px;background:#fff;"></div>
<div class="c" style="left:931px;top:553px;width:38px;height:25px;line-height:25px;"><span style="color:#0000aa">输</span></div>
<div class="a" style="left:970px;top:552px;width:57px;height:25px;background:#fff;"></div>
<div class="c" style="left:970px;top:553px;width:57px;height:25px;line-height:25px;"><span style="color:#0000aa">小</span></div>
<div class="a" style="left:1px;top:578px;width:80px;height:25px;background:#0099cc;"></div>
<div class="c" style="left:1px;top:579px;width:80px;height:25px;line-height:25px;color:#fff;">韩K2联</div>
<div class="a" style="left:82px;top:578px;width:75px;height:25px;background:#f0f0f0;"></div>
<div class="c" style="left:82px;top:579px;width:75px;height:25px;line-height:25px;color:#3a3a3a;">24-06-22</div>
<div class="a" style="left:158px;top:578px;width:142px;height:25px;background:#f0f0f0;"></div>
<div class="c" style="left:158px;top:579px;width:142px;height:25px;line-height:25px;"><span class="card">1</span><span style="color:#0b6e0b">FC安养</span></div>
<div class="a" style="left:301px;top:578px;width:90px;height:25px;background:#f0f0f0;"></div>
<div class="c" style="left:301px;top:579px;width:90px;height:25px;line-height:25px;"><span style="color:#cc0000">2-1</span>(1-1)</div>
<div class="a" style="left:392px;top:578px;width:38px;height:25px;background:#f0f0f0;"></div>
<div class="c" style="left:392px;top:579px;width:38px;height:25px;line-height:25px;color:#3a3a3a;">5-7</div>
<div class="a" style="left:431px;top:578px;width:74px;height:25px;background:#f0f0f0;"></div>
<div class="c" style="left:431px;top:579px;width:74px;height:25px;line-height:25px;">首尔衣恋</div>
<div class="a" style="left:506px;top:578px;width:48px;height:25px;background:#fdf9f6;"></div>
<div class="c" style="left:506px;top:579px;width:48px;height:25px;line-height:25px;color:#3a3a3a;">1.01</div>
<div class="a" style="left:555px;top:578px;width:84px;height:25px;background:#fdf9f6;"></div>
<div class="c" style="left:555px;top:579px;width:84px;height:25px;line-height:25px;">平手</div>
<div class="a" style="left:640px;top:578px;width:51px;height:25px;background:#fdf9f6;"></div>
<div class="c" style="left:640px;top:579px;width:51px;height:25px;line-height:25px;color:#3a3a3a;">0.85</div>
<div class="a" style="left:692px;top:578px;width:65px;height:25px;background:#eff6fb;"></div>
<div class="c" style="left:692px;top:579px;width:65px;height:25px;line-height:25px;color:#3a3a3a;">2.69</div>
<div class="a" style="left:758px;top:578px;width:65px;height:25px;background:#eff6fb;"></div>
<div class="c" style="left:758px;top:579px;width:65px;height:25px;line-height:25px;color:#3a3a3a;">2.97</div>
<div class="a" style="left:824px;top:578px;width:67px;height:25px;background:#eff6fb;"></div>
<div class="c" style="left:824px;top:579px;width:67px;height:25px;line-height:25px;color:#3a3a3a;">2.59</div>
<div class="a" style="left:892px;top:578px;width:38px;height:25px;background:#f0f0f0;"></div>
<div class="c" style="left:892px;top:579px;width:38px;height:25px;line-height:25px;"><span style="color:#cc0000">胜</span></div>
<div class="a" style="left:931px;top:578px;width:38px;height:25px;background:#f0f0f0;"></div>
<div class="c" style="left:931px;top:579px;width:38px;height:25px;line-height:25px;"><span style="color:#cc0000">赢</span></div>
<div class="a" style="left:970px;top:578px;width:57px;height:25px;background:#f0f0f0;"></div>
<div class="c" style="left:970px;top:579px;width:57px;height:25px;line-height:25px;"><span style="color:#cc0000">大</span></div>
<div class="a" style="left:1px;top:604px;width:80px;height:25px;background:#0099cc;"></div>
<div class="c" style="left:1px;top:605px;width:80px;height:25px;line-height:25px;color:#fff;">韩K2联</div>
<div class="a" style="left:82px;top:604px;width:75px;height:25px;background:#fff;"></div>
<div class="c" style="left:82px;top:605px;width:75px;height:25px;line-height:25px;color:#3a3a3a;">24-06-15</div>
<div class="a" style="left:158px;top:604px;width:142px;height:25px;background:#fff;"></div>
<div class="c" style="left:158px;top:605px;width:142px;height:25px;line-height:25px;"><span class="card">1</span>城南足球俱乐部</div>
<div class="a" style="left:301px;top:604px;width:90px;height:25px;background:#fff;"></div>
<div class="c" style="left:301px;top:605px;width:90px;height:25px;line-height:25px;"><span style="color:#cc0000">3-1</span>(1-0)</div>
<div class="a" style="left:392px;top:604px;width:38px;height:25px;background:#fff;"></div>
<div class="c" style="left:392px;top:605px;width:38px;height:25px;line-height:25px;color:#3a3a3a;">3-11</div>
<div class="a" style="left:431px;top:604px;width:74px;height:25px;background:#fff;"></div>
<div class="c" style="left:431px;top:605px;width:74px;height:25px;line-height:25px;"><span style="color:#0b6e0b">FC安养</span></div>
<div class="a" style="left:506px;top:604px;width:48px;height:25px;background:#fdf9f6;"></div>
<div class="c" style="left:506px;top:605px;width:48px;height:25px;line-height:25px;color:#3a3a3a;">1.13</div>
<div class="a" style="left:555px;top:604px;width:84px;height:25px;background:#fdf9f6;"></div>
<div class="c" style="left:555px;top:605px;width:84px;height:25px;line-height:25px;">平手</div>
<div class="a" style="left:640px;top:604px;width:51px;height:25px;background:#fdf9f6;"></div>
<div class="c" style="left:640px;top:605px;width:51px;height:25px;line-height:25px;color:#3a3a3a;">0.74</div>
<div class="a" style="left:692px;top:604px;width:65px;height:25px;background:#eff6fb;"></div>
<div class="c" style="left:692px;top:605px;width:65px;height:25px;line-height:25px;color:#3a3a3a;">2.75</div>
<div class="a" style="left:758px;top:604px;width:65px;height:25px;background:#eff6fb;"></div>
<div class="c" style="left:758px;top:605px;width:65px;height:25px;line-height:25px;color:#3a3a3a;">3.11</div>
<div class="a" style="left:824px;top:604px;width:67px;height:25px;background:#eff6fb;"></div>
<div class="c" style="left:824px;top:605px;width:67px;height:25px;line-height:25px;color:#3a3a3a;">2.43</div>
<div class="a" style="left:892px;top:604px;width:38px;height:25px;background:#fff;"></div>
<div class="c" style="left:892px;top:605px;width:38px;height:25px;line-height:25px;"><span style="color:#0000aa">负</span></div>
<div class="a" style="left:931px;top:604px;width:38px;height:25px;background:#fff;"></div>
<div class="c" style="left:931px;top:605px;width:38px;height:25px;line-height:25px;"><span style="color:#0000aa">输</span></div>
<div class="a" style="left:970px;top:604px;width:57px;height:25px;background:#fff;"></div>
<div class="c" style="left:970px;top:605px;width:57px;height:25px;line-height:25px;"><span style="color:#cc0000">大</span></div>
<div class="a" style="left:1px;top:630px;width:80px;height:25px;background:#0099cc;"></div>
<div class="c" style="left:1px;top:631px;width:80px;height:25px;line-height:25px;color:#fff;">韩K2联</div>
<div class="a" style="left:82px;top:630px;width:75px;height:25px;background:#f0f0f0;"></div>
<div class="c" style="left:82px;top:631px;width:75px;height:25px;line-height:25px;color:#3a3a3a;">24-06-02</div>
<div class="a" style="left:158px;top:630px;width:142px;height:25px;background:#f0f0f0;"></div>
<div class="c" style="left:158px;top:631px;width:142px;height:25px;line-height:25px;"><span style="color:#0b6e0b">FC安养</span></div>
<div class="a" style="left:301px;top:630px;width:90px;height:25px;background:#f0f0f0;"></div>
<div class="c" style="left:301px;top:631px;width:90px;height:25px;line-height:25px;"><span style="color:#cc0000">2-0</span>(2-0)</div>
<div class="a" style="left:392px;top:630px;width:38px;height:25px;background:#f0f0f0;"></div>
<div class="c" style="left:392px;top:631px;width:38px;height:25px;line-height:25px;color:#3a3a3a;">9-3</div>
<div class="a" style="left:431px;top:630px;width:74px;height:25px;background:#f0f0f0;"></div>
<div class="c" style="left:431px;top:631px;width:74px;height:25px;line-height:25px;">忠北清州</div>
<div class="a" style="left:506px;top:630px;width:48px;height:25px;background:#fdf9f6;"></div>
<div class="c" style="left:506px;top:631px;width:48px;height:25px;line-height:25px;color:#3a3a3a;">0.82</div>
<div class="a" style="left:555px;top:630px;width:84px;height:25px;background:#fdf9f6;"></div>
<div class="c" style="left:555px;top:631px;width:84px;height:25px;line-height:25px;">平/半</div>
<div class="a" style="left:640px;top:630px;width:51px;height:25px;background:#fdf9f6;"></div>
<div class="c" style="left:640px;top:631px;width:51px;height:25px;line-height:25px;color:#3a3a3a;">1.04</div>
<div class="a" style="left:692px;top:630px;width:65px;height:25px;background:#eff6fb;"></div>
<div class="c" style="left:692px;top:631px;width:65px;height:25px;line-height:25px;color:#3a3a3a;">1.97</div>
<div class="a" style="left:758px;top:630px;width:65px;height:25px;background:#eff6fb;"></div>
<div class="c" style="left:758px;top:631px;width:65px;height:25px;line-height:25px;color:#3a3a3a;">3.02</div>
<div class="a" style="left:824px;top:630px;width:67px;height:25px;background:#eff6fb;"></div>
<div class="c" style="left:824px;top:631px;width:67px;height:25px;line-height:25px;color:#3a3a3a;">3.88</div>
<div class="a" style="left:892px;top:630px;width:38px;height:25px;background:#f0f0f0;"></div>
<div class="c" style="left:892px;top:631px;width:38px;height:25px;line-height:25px;"><span style="color:#cc0000">胜</span></div>
<div class="a" style="left:931px;top:630px;width:38px;height:25px;background:#f0f0f0;"></div>
<div class="c" style="left:931px;top:631px;width:38px;height:25px;line-height:25px;"><span style="color:#cc0000">赢</span></div>
<div class="a" style="left:970px;top:630px;width:57px;height:25px;background:#f0f0f0;"></div>
<div class="c" style="left:970px;top:631px;width:57px;height:25px;line-height:25px;"><span style="color:#0b6e0b">走</span></div>
<div class="a" style="left:1px;top:656px;width:80px;height:25px;background:#0099cc;"></div>
<div class="c" style="left:1px;top:657px;width:80px;height:25px;line-height:25px;color:#fff;">韩K2联</div>
<div class="a" style="left:82px;top:656px;width:75px;height:25px;background:#fff;"></div>
<div class="c" style="left:82px;top:657px;width:75px;height:25px;line-height:25px;color:#3a3a3a;">24-05-26</div>
<div class="a" style="left:158px;top:656px;width:142px;height:25px;background:#fff;"></div>
<div class="c" style="left:158px;top:657px;width:142px;height:25px;line-height:25px;"><span class="card">1</span><span style="color:#0b6e0b">FC安养</span></div>
<div class="a" style="left:301px;top:656px;width:90px;height:25px;background:#fff;"></div>
<div class="c" style="left:301px;top:657px;width:90px;height:25px;line-height:25px;"><span style="color:#cc0000">2-3</span>(2-0)</div>
<div class="a" style="left:392px;top:656px;width:38px;height:25px;background:#fff;"></div>
<div class="c" style="left:392px;top:657px;width:38px;height:25px;line-height:25px;color:#3a3a3a;">3-3</div>
<div class="a" style="left:431px;top:656px;width:74px;height:25px;background:#fff;"></div>
<div class="c" style="left:431px;top:657px;width:74px;height:25px;line-height:25px;">全南天龙</div>
<div class="a" style="left:506px;top:656px;width:48px;height:25px;background:#fdf9f6;"></div>
<div class="c" style="left:506px;top:657px;width:48px;height:25px;line-height:25px;color:#3a3a3a;">0.80</div>
<div class="a" style="left:555px;top:656px;width:84px;height:25px;background:#fdf9f6;"></div>
<div class="c" style="left:555px;top:657px;width:84px;height:25px;line-height:25px;">平/半</div>
<div class="a" style="left:640px;top:656px;width:51px;height:25px;background:#fdf9f6;"></div>
<div class="c" style="left:640px;top:657px;width:51px;height:25px;line-height:25px;color:#3a3a3a;">1.06</div>
<div class="a" style="left:692px;top:656px;width:65px;height:25px;background:#eff6fb;"></div>
<div class="c" style="left:692px;top:657px;width:65px;height:25px;line-height:25px;color:#3a3a3a;">2.01</div>
<div class="a" style="left:758px;top:656px;width:65px;height:25px;background:#eff6fb;"></div>
<div class="c" style="left:758px;top:657px;width:65px;height:25px;line-height:25px;color:#3a3a3a;">3.03</div>
<div class="a" style="left:824px;top:656px;width:67px;height:25px;background:#eff6fb;"></div>
<div class="c" style="left:824px;top:657px;width:67px;height:25px;line-height:25px;color:#3a3a3a;">3.73</div>
<div class="a" style="left:892px;top:656px;width:38px;height:25px;background:#fff;"></div>
<div class="c" style="left:892px;top:657px;width:38px;height:25px;line-height:25px;"><span style="color:#0000aa">负</span></div>
<div class="a" style="left:931px;top:656px;width:38px;height:25px;background:#fff;"></div>
<div class="c" style="left:931px;top:657px;width:38px;height:25px;line-height:25px;"><span style="color:#0000aa">输</span></div>
<div class="a" style="left:970px;top:656px;width:57px;height:25px;background:#fff;"></div>
<div class="c" style="left:970px;top:657px;width:57px;height:25px;line-height:25px;"><span style="color:#cc0000">大</span></div>
<div class="a" style="left:1px;top:682px;width:80px;height:25px;background:#0099cc;"></div>
<div class="c" style="left:1px;top:683px;width:80px;height:25px;line-height:25px;color:#fff;">韩K2联</div>
<div class="a" style="left:82px;top:682px;width:75px;height:25px;background:#f0f0f0;"></div>
<div class="c" style="left:82px;top:683px;width:75px;height:25px;line-height:25px;color:#3a3a3a;">24-05-19</div>
<div class="a" style="left:158px;top:682px;width:142px;height:25px;background:#f0f0f0;"></div>
<div class="c" style="left:158px;top:683px;width:142px;height:25px;line-height:25px;">天安城</div>
<div class="a" style="left:301px;top:682px;width:90px;height:25px;background:#f0f0f0;"></div>
<div class="c" style="left:301px;top:683px;width:90px;height:25px;line-height:25px;"><span style="color:#cc0000">0-1</span>(0-1)</div>
<div class="a" style="left:392px;top:682px;width:38px;height:25px;background:#f0f0f0;"></div>
<div class="c" style="left:392px;top:683px;width:38px;height:25px;line-height:25px;color:#3a3a3a;">4-0</div>
<div class="a" style="left:431px;top:682px;width:74px;height:25px;background:#f0f0f0;"></div>
<div class="c" style="left:431px;top:683px;width:74px;height:25px;line-height:25px;"><span style="color:#0b6e0b">FC安养</span></div>
<div class="a" style="left:506px;top:682px;width:48px;height:25px;background:#fdf9f6;"></div>
<div class="c" style="left:506px;top:683px;width:48px;height:25px;line-height:25px;color:#3a3a3a;">0.95</div>
<div class="a" style="left:555px;top:682px;width:84px;height:25px;background:#fdf9f6;"></div>
<div class="c" style="left:555px;top:683px;width:84px;height:25px;line-height:25px;">受半球</div>
<div class="a" style="left:640px;top:682px;width:51px;height:25px;background:#fdf9f6;"></div>
<div class="c" style="left:640px;top:683px;width:51px;height:25px;line-height:25px;color:#3a3a3a;">0.91</div>
<div class="a" style="left:692px;top:682px;width:65px;height:25px;background:#eff6fb;"></div>
<div class="c" style="left:692px;top:683px;width:65px;height:25px;line-height:25px;color:#3a3a3a;">3.63</div>
<div class="a" style="left:758px;top:682px;width:65px;height:25px;background:#eff6fb;"></div>
<div class="c" style="left:758px;top:683px;width:65px;height:25px;line-height:25px;color:#3a3a3a;">3.41</div>
<div class="a" style="left:824px;top:682px;width:67px;height:25px;background:#eff6fb;"></div>
<div class="c" style="left:824px;top:683px;width:67px;height:25px;line-height:25px;color:#3a3a3a;">1.89</div>
<div class="a" style="left:892px;top:682px;width:38px;height:25px;background:#f0f0f0;"></div>
<div class="c" style="left:892px;top:683px;width:38px;height:25px;line-height:25px;"><span style="color:#cc0000">胜</span></div>
<div class="a" style="left:931px;top:682px;width:38px;height:25px;background:#f0f0f0;"></div>
<div class="c" style="left:931px;top:683px;width:38px;height:25px;line-height:25px;"><span style="color:#cc0000">赢</span></div>
<div class="a" style="left:970px;top:682px;width:57px;height:25px;background:#f0f0f0;"></div>
<div class="c" style="left:970px;top:683px;width:57px;height:25px;line-height:25px;"><span style="color:#0000aa">小</span></div>
<div class="a" style="left:0px;top:447px;width:1px;height:261px;background:#8fd6f0;"></div>
<div class="a" style="left:1px;top:447px;width:80px;height:1px;background:#cfe8f2;"></div>
<div class="a" style="left:81px;top:447px;width:1px;height:261px;background:#d8eff7;"></div>
<div class="a" style="left:1px;top:473px;width:80px;height:1px;background:#74cdf3;"></div>
<div class="a" style="left:1px;top:499px;width:80px;height:1px;background:#74cdf3;"></div>
<div class="a" style="left:1px;top:525px;width:80px;height:1px;background:#74cdf3;"></div>
<div class="a" style="left:1px;top:551px;width:80px;height:1px;background:#74cdf3;"></div>
<div class="a" style="left:1px;top:577px;width:80px;height:1px;background:#74cdf3;"></div>
<div class="a" style="left:1px;top:603px;width:80px;height:1px;background:#74cdf3;"></div>
<div class="a" style="left:1px;top:629px;width:80px;height:1px;background:#74cdf3;"></div>
<div class="a" style="left:1px;top:655px;width:80px;height:1px;background:#74cdf3;"></div>
<div class="a" style="left:1px;top:681px;width:80px;height:1px;background:#74cdf3;"></div>
<div class="a" style="left:1px;top:707px;width:80px;height:1px;background:#9fd9ef;"></div>
<div class="a" style="left:1px;top:708px;width:1026px;height:25px;background:#fff;"></div>
<div class="c" style="left:1px;top:709px;width:1026px;height:25px;line-height:25px;letter-spacing:0.15px;word-spacing:1px;">近<span style="color:#cc0000">10</span>场,胜6平1负3, 胜率:<span style="color:#cc0000">60%</span> 让胜率:<span style="color:#cc0000">60%</span> 大率:<span style="color:#cc0000">50%</span> 单率:<span style="color:#cc0000">60%</span></div>
</body></html>
